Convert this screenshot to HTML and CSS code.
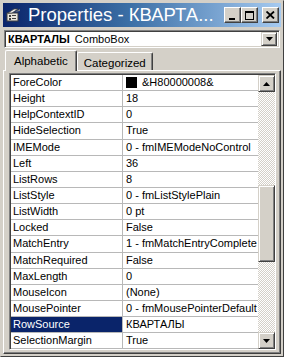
FILE: index.html
```html
<!DOCTYPE html>
<html>
<head>
<meta charset="utf-8">
<link rel="stylesheet" href="styles.css">
</head>
<body>
<div class="win">
  <div class="title">
    <svg class="ticon" width="15" height="14" viewBox="0 0 15 14">
      <rect x="1" y="5" width="11" height="8" fill="#e8e4dc" stroke="#404040" stroke-width="1"/>
      <rect x="3" y="7" width="2" height="2" fill="#404040"/>
      <rect x="3" y="10" width="2" height="2" fill="#404040"/>
      <rect x="6" y="7" width="4" height="1" fill="#404040"/>
      <rect x="6" y="10" width="4" height="1" fill="#404040"/>
      <path d="M2 5 L8 1 L12 1 L6 5 Z" fill="#f0f0f0" stroke="#404040" stroke-width="0.8"/>
      <path d="M9 4 L14 1 L14 3 Z" fill="#808080"/>
    </svg>
    <span class="ttext">Properties - КВАРТА...</span>
    <div class="tbtns">
      <div class="tbtn"><span class="min"></span></div>
      <div class="tbtn"><span class="max"></span></div>
      <div class="tbtn close"><svg width="9" height="8" viewBox="0 0 9 8"><path d="M0.5 0.5 L8 7.5 M8 0.5 L0.5 7.5" stroke="#000" stroke-width="1.8"/></svg></div>
    </div>
  </div>
  <div class="combo">
    <span class="cname">КВАРТАЛЫ</span><span class="ctype">ComboBox</span>
    <div class="cbtn"><svg width="7" height="4" viewBox="0 0 7 4"><path d="M0 0 H7 L3.5 4 Z" fill="#000"/></svg></div>
  </div>
  <div class="tabs">
    <div class="tab sel">Alphabetic</div>
    <div class="tab">Categorized</div>
  </div>
  <div class="panel">
    <div class="grid">
      <div class="rows">
        <div class="row"><div class="n">ForeColor</div><div class="v"><span class="sw"></span>&amp;H80000008&amp;</div></div>
        <div class="row"><div class="n">Height</div><div class="v">18</div></div>
        <div class="row"><div class="n">HelpContextID</div><div class="v">0</div></div>
        <div class="row"><div class="n">HideSelection</div><div class="v">True</div></div>
        <div class="row"><div class="n">IMEMode</div><div class="v">0 - fmIMEModeNoControl</div></div>
        <div class="row"><div class="n">Left</div><div class="v">36</div></div>
        <div class="row"><div class="n">ListRows</div><div class="v">8</div></div>
        <div class="row"><div class="n">ListStyle</div><div class="v">0 - fmListStylePlain</div></div>
        <div class="row"><div class="n">ListWidth</div><div class="v">0 pt</div></div>
        <div class="row"><div class="n">Locked</div><div class="v">False</div></div>
        <div class="row"><div class="n">MatchEntry</div><div class="v">1 - fmMatchEntryComplete</div></div>
        <div class="row"><div class="n">MatchRequired</div><div class="v">False</div></div>
        <div class="row"><div class="n">MaxLength</div><div class="v">0</div></div>
        <div class="row"><div class="n">MouseIcon</div><div class="v">(None)</div></div>
        <div class="row"><div class="n">MousePointer</div><div class="v">0 - fmMousePointerDefault</div></div>
        <div class="row selrow"><div class="n">RowSource</div><div class="v">КВАРТАЛЫ</div></div>
        <div class="row"><div class="n">SelectionMargin</div><div class="v">True</div></div>
      </div>
      <div class="sbar">
        <div class="sbtn"><svg width="7" height="4" viewBox="0 0 7 4"><path d="M0 4 H7 L3.5 0 Z" fill="#000"/></svg></div>
        <div class="track">
          <div class="tpre"></div>
          <div class="thumb"></div>
          <div class="tpost"></div>
        </div>
        <div class="sbtn"><svg width="7" height="4" viewBox="0 0 7 4"><path d="M0 0 H7 L3.5 4 Z" fill="#000"/></svg></div>
      </div>
    </div>
  </div>
</div>
</body>
</html>
```

FILE: styles.css
```css
* { box-sizing: border-box; }
html, body { margin: 0; padding: 0; }
body {
  width: 284px;
  height: 357px;
  overflow: hidden;
  font-family: "Liberation Sans", Arial, sans-serif;
  font-size: 11px;
  color: #000;
}
.win {
  width: 284px;
  height: 357px;
  background: #d4d0c8;
  border-top: 1px solid #d4d0c8;
  border-left: 1px solid #d4d0c8;
  border-right: 1px solid #404040;
  border-bottom: 1px solid #404040;
  padding: 2px 2px 2px 2px;
  display: flex;
  flex-direction: column;
}
.title {
  height: 24px;
  flex: none;
  background: linear-gradient(to right, #0a246a 0%, #3a6ea5 45%, #a6caf0 100%);
  display: flex;
  align-items: center;
  padding-left: 3px;
  padding-right: 2px;
  color: #fff;
}
.ticon { flex: none; margin-right: 7px; margin-top: -1px; }
.ttext {
  font-family: "Liberation Sans", Arial, sans-serif;
  font-size: 18.5px;
  white-space: nowrap;
  flex: 1;
  overflow: hidden;
}
.tbtns { display: flex; align-items: center; flex: none; }
.tbtn {
  width: 17px;
  height: 16px;
  background: #d4d0c8;
  border-top: 1px solid #fff;
  border-left: 1px solid #fff;
  border-right: 1px solid #404040;
  border-bottom: 1px solid #404040;
  box-shadow: inset -1px -1px 0 #808080;
  display: flex;
  align-items: center;
  justify-content: center;
}
.tbtn.close { margin-left: 4px; }
.min {
  display: block;
  width: 6px;
  height: 2px;
  background: #000;
  margin-top: 7px;
  margin-left: -2px;
}
.max {
  display: block;
  width: 9px;
  height: 9px;
  border: 1px solid #000;
  border-top-width: 2px;
}
.combo {
  margin: 3px 1px 0 1px;
  height: 18px;
  flex: none;
  background: #fff;
  border-top: 1px solid #808080;
  border-left: 1px solid #808080;
  border-right: 1px solid #fff;
  border-bottom: 1px solid #fff;
  box-shadow: inset 1px 1px 0 #404040, inset -1px -1px 0 #d4d0c8;
  display: flex;
  align-items: center;
  padding-left: 3px;
  padding-right: 2px;
  white-space: nowrap;
}
.cname { font-weight: bold; margin-right: 5px; }
.ctype { flex: 1; }
.cbtn {
  width: 16px;
  height: 14px;
  background: #d4d0c8;
  border-top: 1px solid #d4d0c8;
  border-left: 1px solid #d4d0c8;
  border-right: 1px solid #404040;
  border-bottom: 1px solid #404040;
  box-shadow: inset 1px 1px 0 #fff, inset -1px -1px 0 #808080;
  display: flex;
  align-items: center;
  justify-content: center;
  flex: none;
}
.tabs {
  display: flex;
  align-items: flex-end;
  height: 22px;
  flex: none;
  padding-left: 2px;
}
.tab {
  height: 18px;
  padding: 2px 6px 0 6px;
  border-top: 1px solid #fff;
  border-left: 1px solid #fff;
  border-right: 1px solid #404040;
  box-shadow: inset -1px 0 0 #808080;
  border-radius: 2px 2px 0 0;
  display: flex;
  align-items: center;
  font-size: 11.5px;
}
.tab.sel {
  height: 21px;
  padding: 0 8px 1px 8px;
  margin-bottom: -1px;
  background: #d4d0c8;
  position: relative;
  z-index: 1;
}
.panel {
  flex: 1;
  border-top: 1px solid #fff;
  border-left: 1px solid #fff;
  border-right: 1px solid #404040;
  border-bottom: 1px solid #404040;
  box-shadow: inset -1px -1px 0 #808080;
  padding: 2px 4px 3px 5px;
  display: flex;
}
.grid {
  flex: 1;
  display: flex;
  border-top: 1px solid #808080;
  border-left: 1px solid #808080;
  border-right: 1px solid #fff;
  border-bottom: 1px solid #fff;
  box-shadow: inset 1px 1px 0 #404040;
  padding: 1px 0 0 1px;
  background: #fff;
}
.rows {
  flex: 1;
  display: flex;
  flex-direction: column;
  overflow: hidden;
}
.row {
  height: 16.15px;
  flex: none;
  display: flex;
  border-bottom: 1px solid #b8b8b8;
  white-space: nowrap;
}
.n {
  width: 112px;
  flex: none;
  padding-left: 2px;
  border-right: 1px solid #b8b8b8;
  line-height: 15px;
  overflow: hidden;
}
.v {
  flex: 1;
  padding-left: 3px;
  line-height: 15px;
  overflow: hidden;
  display: flex;
  align-items: center;
}
.selrow .n { background: #0a246a; color: #fff; }
.sw {
  display: inline-block;
  width: 11px;
  height: 11px;
  background: #000;
  margin-right: 5px;
  flex: none;
}
.sbar {
  width: 17px;
  flex: none;
  display: flex;
  flex-direction: column;
  background: #d4d0c8;
}
.sbtn {
  height: 17px;
  flex: none;
  background: #d4d0c8;
  border-top: 1px solid #d4d0c8;
  border-left: 1px solid #d4d0c8;
  border-right: 1px solid #404040;
  border-bottom: 1px solid #404040;
  box-shadow: inset 1px 1px 0 #fff, inset -1px -1px 0 #808080;
  display: flex;
  align-items: center;
  justify-content: center;
}
.track {
  flex: 1;
  display: flex;
  flex-direction: column;
  background-color: #ffffff;
  background-image:
    linear-gradient(45deg, #d4d0c8 25%, transparent 25%, transparent 75%, #d4d0c8 75%),
    linear-gradient(45deg, #d4d0c8 25%, transparent 25%, transparent 75%, #d4d0c8 75%);
  background-size: 2px 2px;
  background-position: 0 0, 1px 1px;
}
.tpre { height: 93px; flex: none; }
.thumb {
  height: 77px;
  flex: none;
  background: #d4d0c8;
  border-top: 1px solid #d4d0c8;
  border-left: 1px solid #d4d0c8;
  border-right: 1px solid #404040;
  border-bottom: 1px solid #404040;
  box-shadow: inset 1px 1px 0 #fff, inset -1px -1px 0 #808080;
}
.tpost { flex: 1; }
```
